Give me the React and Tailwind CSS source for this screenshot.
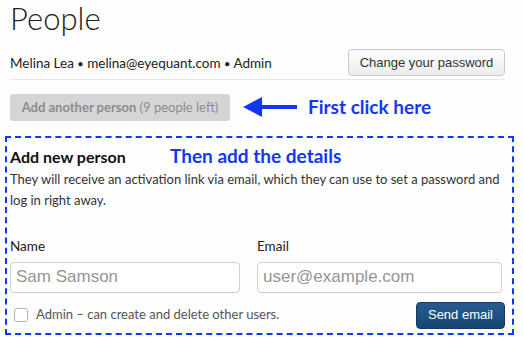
import React from 'react';

const App = () => {
  return (
    <div className="min-h-screen w-[523px] bg-[#fdfdfd] px-[10px] font-['Lato',sans-serif] text-[#222]">
      {/* Title */}
      <h1 className="text-[31px] leading-[37px] font-light text-[#222]">People</h1>

      {/* Current user */}
      <div className="mt-[12px] w-[495px] border-b border-[#e6e6e6] pb-[3px]">
        <div className="flex h-[27px] items-center justify-between">
          <span className="pt-[2px] text-[13.5px] text-[#222]">
            Melina Lea <span className="text-[11px]">•</span> melina@eyequant.com <span className="text-[11px]">•</span> Admin
          </span>
          <button className="h-[27px] w-[157px] rounded-[4px] border border-[#c8c8c8] bg-gradient-to-b from-[#ffffff] to-[#ececec] font-['Liberation_Sans',sans-serif] text-[13px] text-[#333]">
            Change your password
          </button>
        </div>
      </div>

      {/* Add person + annotation */}
      <div className="mt-[13px] flex items-center">
        <button className="h-[27px] w-[220px] rounded-[3px] bg-[#d5d5d5] text-[13px] text-[#8c8c8c]">
          <span className="font-bold">Add another person</span> (9 people left)
        </button>
        <svg width="54" height="20" viewBox="0 0 54 20" className="ml-[13px]">
          <polygon points="0,10 19,0 19,20" fill="#1237f0" />
          <rect x="18" y="8" width="36" height="4" fill="#1237f0" />
        </svg>
        <span className="ml-[11px] text-[19px] font-bold text-[#1237f0]">First click here</span>
      </div>

      {/* New person form */}
      <div className="relative -ml-[5px] mt-[14px] h-[199px] w-[509px] border-2 border-dashed border-[#1237f0] pl-[3px] pr-[7px] pt-[8px]">
        <span className="absolute left-[163px] top-[4px] text-[19px] font-bold text-[#1237f0]">
          Then add the details
        </span>
        <h2 className="text-[16px] leading-[21px] font-bold text-[#111]">Add new person</h2>
        <p className="mt-[2px] text-[13px] leading-[21px] text-[#333]">
          They will receive an activation link via email, which they can use to set a password and log in right away.
        </p>

        <div className="mt-[26px] flex gap-[17px]">
          <div className="w-[230px]">
            <label className="block text-[13.5px] leading-[18px] text-[#222]">Name</label>
            <input
              placeholder="Sam Samson"
              className="mt-[7px] h-[31px] w-[230px] rounded-[4px] border border-[#cfcfcf] bg-white px-[5px] font-['Liberation_Sans',sans-serif] text-[17px] placeholder:text-[#959595]"
            />
          </div>
          <div className="w-[245px]">
            <label className="block text-[13.5px] leading-[18px] text-[#222]">Email</label>
            <input
              placeholder="user@example.com"
              className="mt-[7px] h-[31px] w-[245px] rounded-[4px] border border-[#cfcfcf] bg-white px-[5px] font-['Liberation_Sans',sans-serif] text-[17px] placeholder:text-[#959595]"
            />
          </div>
        </div>

        <div className="mt-[9px] flex h-[27px] items-center justify-between">
          <label className="ml-[4px] flex items-center text-[13px] text-[#555]">
            <span className="h-[14px] w-[14px] rounded-[3px] border border-[#b5b5b5] bg-white" />
            <span className="ml-[8px]">Admin – can create and delete other users.</span>
          </label>
          <button className="h-[27px] w-[89px] rounded-[4px] border border-[#153a60] bg-gradient-to-b from-[#255d90] to-[#1a4571] font-['Liberation_Sans',sans-serif] text-[13px] text-white">
            Send email
          </button>
        </div>
      </div>
    </div>
  );
};

export default App;
